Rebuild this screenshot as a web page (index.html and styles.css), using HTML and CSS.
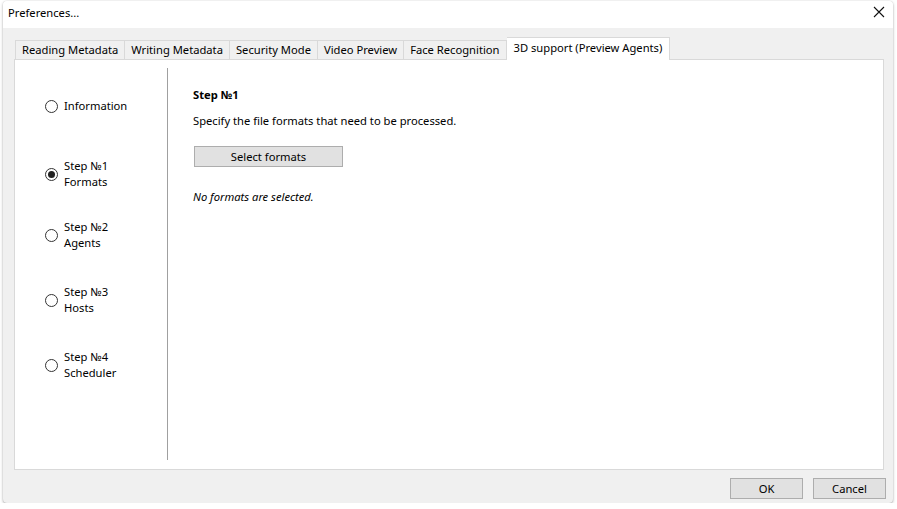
FILE: index.html
```html
<!DOCTYPE html>
<html>
<head>
<meta charset="utf-8">
<link rel="stylesheet" href="styles.css">
</head>
<body>
<div class="window">
  <div class="titlebar">
    <span class="title">Preferences...</span>
    <svg class="close" width="12" height="12" viewBox="0 0 12 12"><path d="M1 1 L11 11 M11 1 L1 11" stroke="#111" stroke-width="1.1" fill="none"/></svg>
  </div>
  <div class="content">
    <div class="tabs">
      <div class="tab">Reading Metadata</div>
      <div class="tab">Writing Metadata</div>
      <div class="tab">Security Mode</div>
      <div class="tab">Video Preview</div>
      <div class="tab">Face Recognition</div>
      <div class="tab active">3D support (Preview Agents)</div>
    </div>
    <div class="panel">
      <div class="steps">
        <label class="step"><span class="radio"></span><span class="label">Information</span></label>
        <label class="step"><span class="radio checked"></span><span class="label">Step №1<br>Formats</span></label>
        <label class="step"><span class="radio"></span><span class="label">Step №2<br>Agents</span></label>
        <label class="step"><span class="radio"></span><span class="label">Step №3<br>Hosts</span></label>
        <label class="step"><span class="radio"></span><span class="label">Step №4<br>Scheduler</span></label>
      </div>
      <div class="divider"></div>
      <div class="detail">
        <div class="heading">Step №1</div>
        <div class="desc">Specify the file formats that need to be processed.</div>
        <button class="btn select">Select formats</button>
        <div class="note">No formats are selected.</div>
      </div>
    </div>
    <div class="footer">
      <button class="btn ok">OK</button>
      <button class="btn cancel">Cancel</button>
    </div>
  </div>
</div>
</body>
</html>
```
FILE: styles.css
```css
html, body {
  margin: 0;
  padding: 0;
  background: #ffffff;
}
body {
  font-family: "Noto Sans", "Liberation Sans", sans-serif;
  font-size: 11.2px;
  color: #000;
}
.window {
  margin: 1px 0 0 3px;
  width: 890px;
  height: 502px;
  background: #f0f0f0;
  border-radius: 4px;
  box-shadow: 0 1px 3px rgba(0,0,0,0.3), 0 0 1px rgba(0,0,0,0.2);
  display: flex;
  flex-direction: column;
  overflow: hidden;
}
.titlebar {
  height: 27px;
  background: #fff;
  display: flex;
  align-items: center;
  justify-content: space-between;
  padding: 0 8px 0 5px;
  flex: none;
}
.title {
  line-height: 16px;
  margin-top: -4px;
}
.close {
  margin-top: -5px;
}
.content {
  flex: 1;
  display: flex;
  flex-direction: column;
  padding: 9px 9px 0 11px;
}
.tabs {
  display: flex;
  align-items: flex-end;
  height: 23px;
  padding-left: 1px;
  position: relative;
  z-index: 1;
  margin-bottom: -1px;
}
.tab {
  height: 20px;
  box-sizing: border-box;
  border: 1px solid #d9d9d9;
  border-right: none;
  background: #f0f0f0;
  padding: 0 6px;
  line-height: 18px;
  white-space: nowrap;
}
.tab:nth-last-child(2) {
  border-right: 1px solid #d9d9d9;
}
.tab.active {
  height: 23px;
  background: #fff;
  border: 1px solid #d9d9d9;
  border-bottom: none;
  border-left: none;
  padding: 0 7px 0 7px;
  line-height: 19px;
}
.panel {
  height: 411px;
  box-sizing: border-box;
  background: #fff;
  border: 1px solid #d9d9d9;
  display: flex;
  flex: none;
}
.steps {
  width: 152px;
  flex: none;
  display: flex;
  flex-direction: column;
  padding-top: 38px;
  box-sizing: border-box;
}
.step {
  display: flex;
  align-items: center;
  padding-left: 30px;
  line-height: 16px;
  margin-bottom: 33px;
}
.step:first-child {
  margin-bottom: 44px;
}
.step:nth-child(2) {
  margin-bottom: 29px;
}
.radio {
  width: 13px;
  height: 13px;
  box-sizing: border-box;
  border: 1px solid #333;
  border-radius: 50%;
  margin-right: 6px;
  flex: none;
  display: flex;
  align-items: center;
  justify-content: center;
}
.radio.checked::after {
  content: "";
  width: 7px;
  height: 7px;
  border-radius: 50%;
  background: #222;
}
.divider {
  width: 1px;
  background: #a0a0a0;
  margin: 8px 0 9px;
  flex: none;
}
.detail {
  padding: 27px 0 0 25px;
  display: flex;
  flex-direction: column;
  align-items: flex-start;
}
.heading {
  font-weight: bold;
  line-height: 16px;
}
.desc {
  margin-top: 10px;
  line-height: 16px;
}
.btn {
  font-family: inherit;
  font-size: 11.2px;
  color: #000;
  background: #e1e1e1;
  border: 1px solid #adadad;
  box-sizing: border-box;
  height: 21px;
  padding: 0;
  line-height: 19px;
}
.select {
  width: 149px;
  margin: 17px 0 0 1px;
}
.note {
  font-style: italic;
  margin-top: 22px;
  line-height: 16px;
}
.footer {
  display: flex;
  justify-content: flex-end;
  gap: 10px;
  padding: 8px 0 0;
  margin-right: -2px;
}
.ok, .cancel {
  width: 73px;
}
```
